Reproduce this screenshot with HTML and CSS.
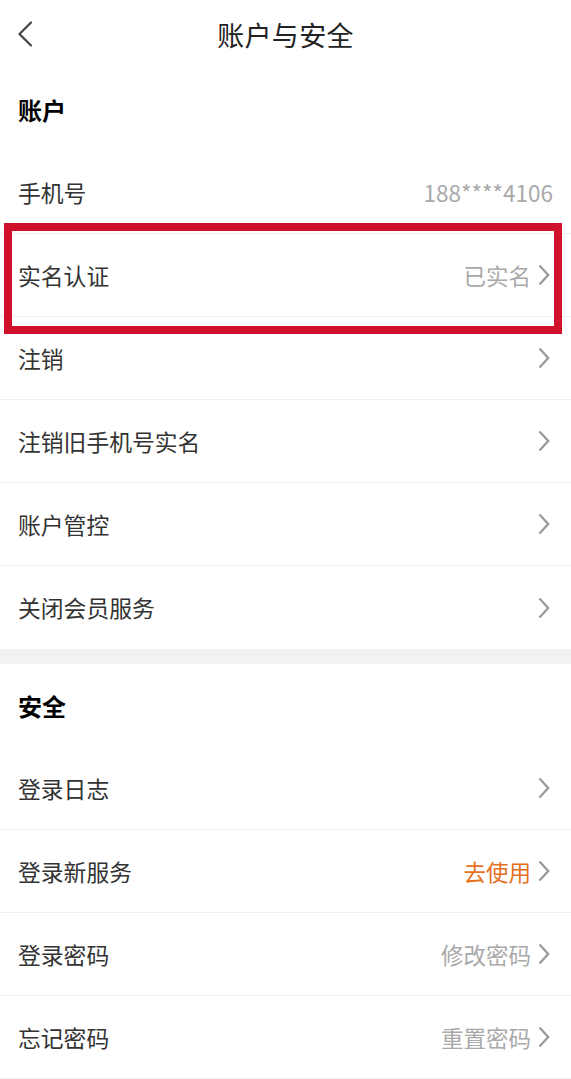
FILE: index.html
```html
<!DOCTYPE html>
<html lang="zh-CN">
<head>
<meta charset="utf-8">
<title>账户与安全</title>
<link rel="stylesheet" href="styles.css">
</head>
<body>
<div class="page">
  <header class="topbar">
    <span class="back">
      <svg width="16" height="26" viewBox="0 0 16 26"><path d="M14 1.5 L2.5 13 L14 24.5" fill="none" stroke="#444" stroke-width="2.2" stroke-linecap="round" stroke-linejoin="round"/></svg>
    </span>
    <h1 class="title">账户与安全</h1>
  </header>

  <section class="group">
    <div class="group-head">账户</div>
    <div class="row"><span class="label">手机号</span><span class="value">188****4106</span></div>
    <div class="row highlight">
      <span class="label">实名认证</span>
      <span class="value">已实名</span>
      <span class="chev"><svg width="12" height="22" viewBox="0 0 12 22"><path d="M1.5 1.5 L10.2 11 L1.5 20.5" fill="none" stroke="#9a9a9a" stroke-width="2.3"/></svg></span>
      <span class="mark"></span>
    </div>
    <div class="row"><span class="label">注销</span><span class="chev"><svg width="12" height="22" viewBox="0 0 12 22"><path d="M1.5 1.5 L10.2 11 L1.5 20.5" fill="none" stroke="#9a9a9a" stroke-width="2.3"/></svg></span></div>
    <div class="row"><span class="label">注销旧手机号实名</span><span class="chev"><svg width="12" height="22" viewBox="0 0 12 22"><path d="M1.5 1.5 L10.2 11 L1.5 20.5" fill="none" stroke="#9a9a9a" stroke-width="2.3"/></svg></span></div>
    <div class="row"><span class="label">账户管控</span><span class="chev"><svg width="12" height="22" viewBox="0 0 12 22"><path d="M1.5 1.5 L10.2 11 L1.5 20.5" fill="none" stroke="#9a9a9a" stroke-width="2.3"/></svg></span></div>
    <div class="row last"><span class="label">关闭会员服务</span><span class="chev"><svg width="12" height="22" viewBox="0 0 12 22"><path d="M1.5 1.5 L10.2 11 L1.5 20.5" fill="none" stroke="#9a9a9a" stroke-width="2.3"/></svg></span></div>
  </section>

  <div class="band"></div>

  <section class="group">
    <div class="group-head">安全</div>
    <div class="row"><span class="label">登录日志</span><span class="chev"><svg width="12" height="22" viewBox="0 0 12 22"><path d="M1.5 1.5 L10.2 11 L1.5 20.5" fill="none" stroke="#9a9a9a" stroke-width="2.3"/></svg></span></div>
    <div class="row"><span class="label">登录新服务</span><span class="value accent">去使用</span><span class="chev"><svg width="12" height="22" viewBox="0 0 12 22"><path d="M1.5 1.5 L10.2 11 L1.5 20.5" fill="none" stroke="#9a9a9a" stroke-width="2.3"/></svg></span></div>
    <div class="row"><span class="label">登录密码</span><span class="value">修改密码</span><span class="chev"><svg width="12" height="22" viewBox="0 0 12 22"><path d="M1.5 1.5 L10.2 11 L1.5 20.5" fill="none" stroke="#9a9a9a" stroke-width="2.3"/></svg></span></div>
    <div class="row"><span class="label">忘记密码</span><span class="value">重置密码</span><span class="chev"><svg width="12" height="22" viewBox="0 0 12 22"><path d="M1.5 1.5 L10.2 11 L1.5 20.5" fill="none" stroke="#9a9a9a" stroke-width="2.3"/></svg></span></div>
  </section>
</div>
</body>
</html>
```

FILE: styles.css
```css
* { box-sizing: border-box; }
html, body { margin: 0; padding: 0; background: #fff; }
body {
  font-family: "Noto Sans CJK SC", "Noto Sans", sans-serif;
  color: #333;
}
.page { width: 571px; overflow: hidden; }

.topbar {
  height: 68px;
  display: flex;
  align-items: center;
  justify-content: center;
  position: relative;
}
.back {
  position: absolute;
  left: 17px;
  top: 21px;
  display: flex;
}
.title {
  margin: 0;
  font-size: 27px;
  font-weight: 400;
  color: #222;
  letter-spacing: 0.3px;
}

.group-head {
  height: 83px;
  display: flex;
  align-items: center;
  padding-left: 18px;
  font-size: 24px;
  font-weight: 700;
  color: #000;
}

.row {
  height: 83px;
  display: flex;
  align-items: center;
  padding: 0 18px;
  border-bottom: 1px solid #efefef;
  position: relative;
}
.row.last { border-bottom: none; }
.label {
  flex: 1;
  font-size: 22.8px;
  color: #333;
}
.value {
  font-size: 22.5px;
  color: #a9a9a9;
}
.value.accent { color: #e5701d; }
.chev {
  display: flex;
  margin-left: 7px;
  margin-right: 3px;
}

.band {
  height: 15px;
  background: #f2f2f2;
}

.highlight .mark {
  position: absolute;
  left: 4px;
  top: -11px;
  width: 558px;
  height: 111px;
  border: 8px solid #d0112b;
  pointer-events: none;
}
```
